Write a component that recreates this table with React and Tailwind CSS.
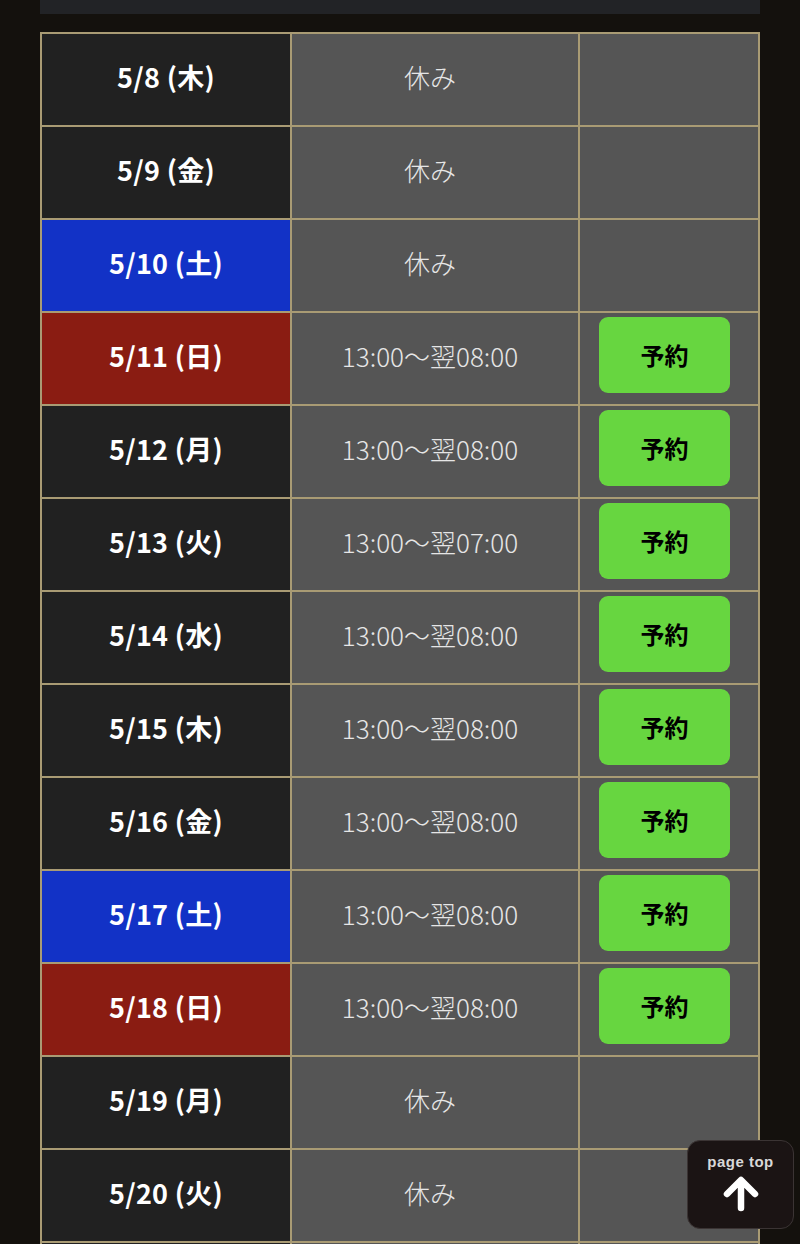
import React from 'react';

const rows = [
  { date: '5/8 (木)', day: 'plain', time: '休み' },
  { date: '5/9 (金)', day: 'plain', time: '休み' },
  { date: '5/10 (土)', day: 'sat', time: '休み' },
  { date: '5/11 (日)', day: 'sun', time: '13:00〜翌08:00', open: true },
  { date: '5/12 (月)', day: 'plain', time: '13:00〜翌08:00', open: true },
  { date: '5/13 (火)', day: 'plain', time: '13:00〜翌07:00', open: true },
  { date: '5/14 (水)', day: 'plain', time: '13:00〜翌08:00', open: true },
  { date: '5/15 (木)', day: 'plain', time: '13:00〜翌08:00', open: true },
  { date: '5/16 (金)', day: 'plain', time: '13:00〜翌08:00', open: true },
  { date: '5/17 (土)', day: 'sat', time: '13:00〜翌08:00', open: true },
  { date: '5/18 (日)', day: 'sun', time: '13:00〜翌08:00', open: true },
  { date: '5/19 (月)', day: 'plain', time: '休み' },
  { date: '5/20 (火)', day: 'plain', time: '休み' },
  { date: '5/21 (水)', day: 'plain', time: '休み' },
];

const dayBg = {
  plain: 'bg-[#212121]',
  sat: 'bg-[#1232c6]',
  sun: 'bg-[#8a1c12]',
};

const Row = ({ row }) => (
  <div className="flex h-[93px] border-b-2 border-[#a99b74]">
    <div
      className={`w-[250px] flex items-center justify-center pb-[6px] border-r-2 border-[#a99b74] text-white font-bold text-[27px] leading-none tracking-[0.3px] ${dayBg[row.day]}`}
    >
      {row.date}
    </div>
    <div className="w-[288px] flex items-center justify-center pb-[5px] pr-[10px] border-r-2 border-[#a99b74] bg-[#555555] text-[#e6e6e6] text-[26px] font-light leading-none">
      {row.time}
    </div>
    <div className="flex-1 bg-[#555555] pt-[4px] pl-[19px]">
      {row.open && (
        <button className="w-[131px] h-[76px] rounded-[9px] bg-[#67d640] text-black font-bold text-[24px] leading-none pb-[1px] flex items-center justify-center">
          予約
        </button>
      )}
    </div>
  </div>
);

const App = () => {
  return (
    <div
      className="relative w-[800px] h-[1244px] overflow-hidden bg-[#14110d]"
      style={{ fontFamily: '"Noto Sans CJK JP", "Noto Sans", sans-serif' }}
    >
      <div className="mx-[40px] h-[14px] bg-[#222326]" />
      <div className="mx-[40px] mt-[18px] border-t-2 border-l-2 border-r-2 border-[#a99b74]">
        {rows.map((row) => (
          <Row key={row.date} row={row} />
        ))}
      </div>

      <div className="absolute left-[687px] top-[1140px] w-[107px] h-[89px] rounded-[13px] bg-[#1b1414] border border-[#3b3434] flex flex-col items-center pt-[13px]">
        <span
          className="text-[#d8d8d8] text-[15px] font-bold leading-none tracking-[0.5px]"
          style={{ fontFamily: '"Liberation Sans", Arial, sans-serif' }}
        >
          page top
        </span>
        <svg width="40" height="38" viewBox="0 0 40 38" className="mt-[5px]">
          <path d="M20 34 V7 M6 20 L20 6 L34 20" fill="none" stroke="#ffffff" strokeWidth="6.5" strokeLinecap="round" strokeLinejoin="round" />
        </svg>
      </div>
    </div>
  );
};

export default App;
